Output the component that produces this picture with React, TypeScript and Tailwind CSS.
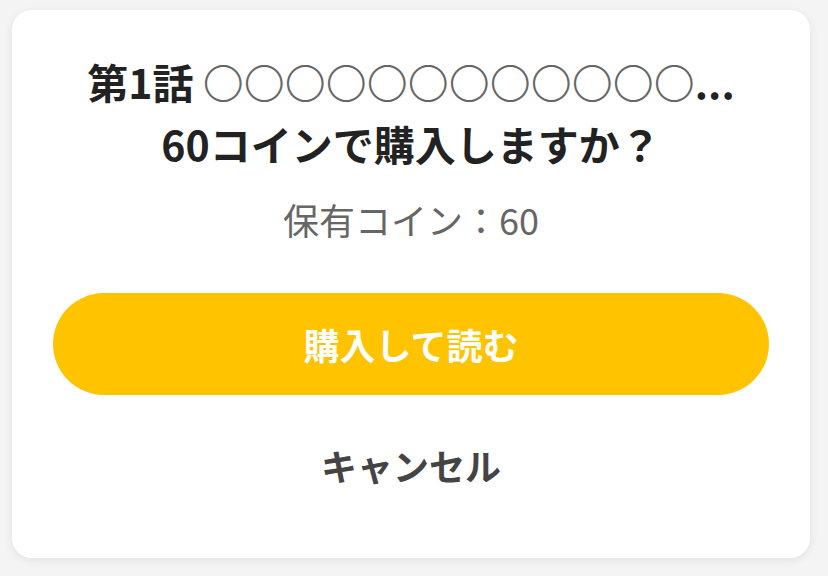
import React from "react";

export default function App() {
  return (
    <div
      className="w-[828px] h-[576px] bg-[#f4f4f4] pt-[10px] pl-[12px]"
      style={{ fontFamily: '"Noto Sans CJK JP", "Noto Sans", sans-serif' }}
    >
      <div className="w-[798px] h-[548px] bg-white rounded-[20px] shadow-[0_2px_10px_rgba(0,0,0,0.08)] flex flex-col items-center pt-[40px] px-[41px]">
        <div className="text-center text-[41px] leading-[62px] font-bold text-[#222222] whitespace-nowrap">
          <div>
            第1話 <span className="font-light text-[#666666]">〇〇〇〇〇〇〇〇〇〇〇〇</span>...
          </div>
          <div>60コインで購入しますか？</div>
        </div>
        <div className="mt-[21px] text-[36px] leading-[48px] text-[#666666]">保有コイン：60</div>
        <button className="mt-[50px] w-full h-[102px] rounded-full bg-[#ffc300] text-white text-[36px] font-bold">
          購入して読む
        </button>
        <button className="mt-[46px] text-[36px] leading-[48px] font-bold text-[#444444]">キャンセル</button>
      </div>
    </div>
  );
}
